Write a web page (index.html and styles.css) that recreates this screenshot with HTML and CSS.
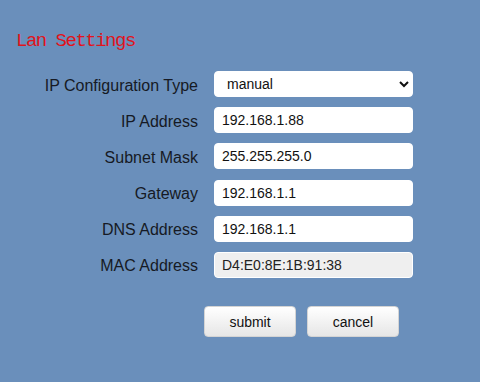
FILE: index.html
```html
<!DOCTYPE html>
<html lang="en">
<head>
  <meta charset="UTF-8">
  <meta name="viewport" content="width=device-width, initial-scale=1.0">
  <title>Lan Settings</title>
  <link rel="stylesheet" href="styles.css">
</head>
<body>
  <h2 class="title">Lan Settings</h2>
  <div class="form">
    <label for="ip-type">IP Configuration Type</label>
    <select id="ip-type">
      <option>manual</option>
      <option>dhcp</option>
    </select>
    <label for="ip-addr">IP Address</label>
    <input type="text" id="ip-addr" value="192.168.1.88">
    <label for="mask">Subnet Mask</label>
    <input type="text" id="mask" value="255.255.255.0">
    <label for="gateway">Gateway</label>
    <input type="text" id="gateway" value="192.168.1.1">
    <label for="dns">DNS Address</label>
    <input type="text" id="dns" value="192.168.1.1">
    <label for="mac">MAC Address</label>
    <input type="text" id="mac" class="readonly" value="D4:E0:8E:1B:91:38" readonly>
    <div class="buttons">
      <button>submit</button>
      <button>cancel</button>
    </div>
  </div>
</body>
</html>
```

FILE: styles.css
```css
body {
  margin: 0;
  padding: 0;
  background-color: #6a8fbb;
  font-family: "Liberation Sans", Arial, sans-serif;
  height: 382px;
}
.title {
  margin: 0;
  padding: 29px 0 0 16px;
  font-family: "Liberation Mono", monospace;
  font-size: 19px;
  font-weight: normal;
  letter-spacing: -1.5px;
  color: #e0141c;
  line-height: 24px;
}
.form {
  display: grid;
  grid-template-columns: 198px 199px;
  column-gap: 16px;
  row-gap: 10.2px;
  margin-top: 18px;
  align-items: center;
}
.form label {
  justify-self: end;
  padding-top: 3px;
  font-size: 16px;
  color: #161a24;
}
.form input,
.form select {
  box-sizing: border-box;
  width: 199px;
  height: 26px;
  border: 1px solid #ffffff;
  border-radius: 4px;
  background-color: #ffffff;
  font-family: "Liberation Sans", Arial, sans-serif;
  font-size: 14px;
  color: #111;
  padding: 0 7px;
  outline: none;
}
.form select {
  padding-left: 8px;
}
.form input.readonly {
  background-color: #efefef;
  color: #222;
}
.buttons {
  grid-column: 2;
  display: flex;
  gap: 11px;
  margin: 18px 0 0 -10px;
}
.buttons button {
  width: 92px;
  height: 31px;
  border: 1px solid #d4d4d4;
  border-radius: 4px;
  background: linear-gradient(#ffffff, #e6e6e6);
  font-family: "Liberation Sans", Arial, sans-serif;
  font-size: 14px;
  color: #111;
  cursor: pointer;
}
```
